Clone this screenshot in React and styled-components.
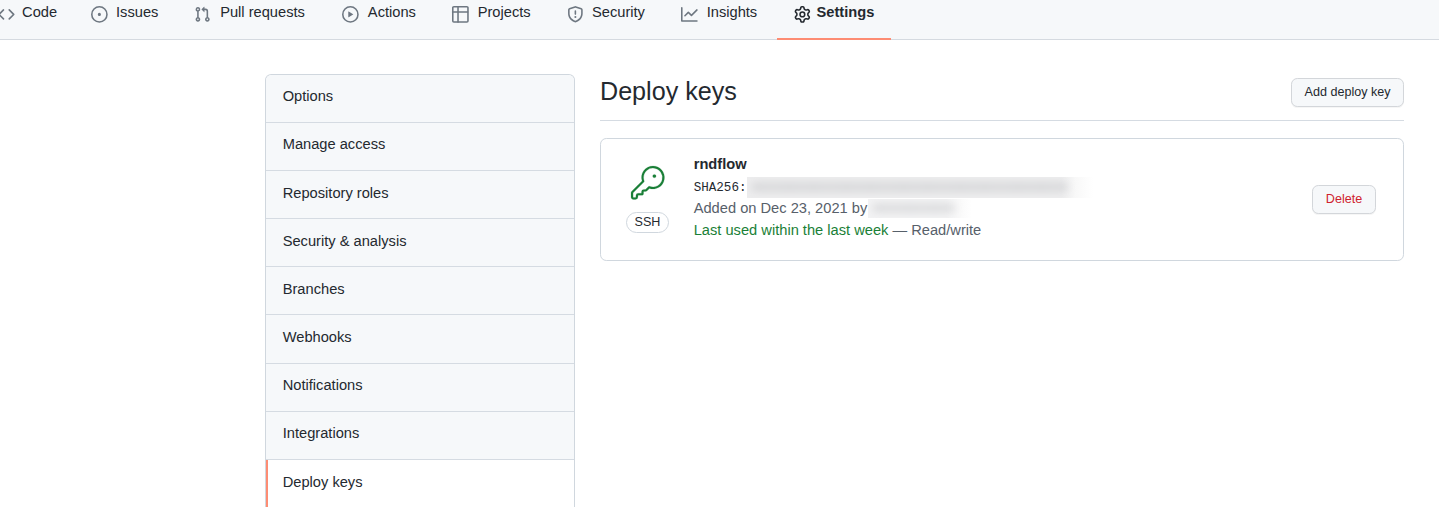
import React from "react";
import styled, { createGlobalStyle, css } from "styled-components";

const GlobalStyle = createGlobalStyle`
  * { box-sizing: border-box; }
  html, body { height: 100%; overflow: hidden; }
  body {
    margin: 0;
    background: #ffffff;
    color: #24292f;
    font-family: "Liberation Sans", Arial, sans-serif;
    font-size: 14.66px;
    line-height: 22px;
  }
`;

const ICONS = {
  code: "M4.72 3.22a.75.75 0 011.06 1.06L2.06 8l3.72 3.72a.75.75 0 11-1.06 1.06L.47 8.53a.75.75 0 010-1.06l4.25-4.25zm6.56 0a.75.75 0 10-1.06 1.06L13.94 8l-3.72 3.72a.75.75 0 101.06 1.06l4.25-4.25a.75.75 0 000-1.06l-4.25-4.25z",
  issue: "M8 9.5a1.5 1.5 0 100-3 1.5 1.5 0 000 3zM8 0a8 8 0 100 16A8 8 0 008 0zM1.5 8a6.5 6.5 0 1113 0 6.5 6.5 0 01-13 0z",
  pull: "M7.177 3.073L9.573.677A.25.25 0 0110 .854v4.792a.25.25 0 01-.427.177L7.177 3.427a.25.25 0 010-.354zM3.75 2.5a.75.75 0 100 1.5.75.75 0 000-1.5zm-2.25.75a2.25 2.25 0 113 2.122v5.256a2.251 2.251 0 11-1.5 0V5.372A2.25 2.25 0 011.5 3.25zM11 2.5h-1V4h1a1 1 0 011 1v5.628a2.251 2.251 0 101.5 0V5A2.5 2.5 0 0011 2.5zm1 10.25a.75.75 0 111.5 0 .75.75 0 01-1.5 0zM3.75 12a.75.75 0 100 1.5.75.75 0 000-1.5z",
  play: "M1.5 8a6.5 6.5 0 1113 0 6.5 6.5 0 01-13 0zM8 0a8 8 0 100 16A8 8 0 008 0zM6.379 5.227A.25.25 0 006 5.442v5.117a.25.25 0 00.379.214l4.264-2.559a.25.25 0 000-.428L6.379 5.227z",
  table: "M0 1.75C0 .784.784 0 1.75 0h12.5C15.216 0 16 .784 16 1.75v3.585a.746.746 0 010 .83v8.085A1.75 1.75 0 0114.25 16H6.309a.748.748 0 01-1.118 0H1.75A1.75 1.75 0 010 14.25V6.165a.746.746 0 010-.83V1.75zM1.5 6.5v7.75c0 .138.112.25.25.25H5v-8H1.5zM5 5H1.5V1.75a.25.25 0 01.25-.25H5V5zm1.5 1.5v8h7.75a.25.25 0 00.25-.25V6.5h-8zm8-1.5h-8V1.5h7.75a.25.25 0 01.25.25V5z",
  shield: "M7.467.133a1.75 1.75 0 011.066 0l5.25 1.68A1.75 1.75 0 0115 3.48V7c0 1.566-.32 3.182-1.303 4.682-.983 1.498-2.585 2.813-5.032 3.855a1.7 1.7 0 01-1.33 0c-2.447-1.042-4.049-2.357-5.032-3.855C1.32 10.182 1 8.566 1 7V3.48a1.75 1.75 0 011.217-1.667l5.25-1.68zm.61 1.429a.25.25 0 00-.153 0l-5.25 1.68a.25.25 0 00-.174.238V7c0 1.358.275 2.666 1.057 3.86.784 1.194 2.121 2.34 4.366 3.297a.2.2 0 00.154 0c2.245-.956 3.582-2.104 4.366-3.298C13.225 9.666 13.5 8.36 13.5 7V3.48a.25.25 0 00-.174-.237l-5.25-1.68zM9 10.5a1 1 0 11-2 0 1 1 0 012 0zm-.25-5.75a.75.75 0 10-1.5 0v3a.75.75 0 001.5 0v-3z",
  graph: "M1.5 1.75a.75.75 0 00-1.5 0v12.5c0 .414.336.75.75.75h14.5a.75.75 0 000-1.5H1.5V1.75zm14.28 2.53a.75.75 0 00-1.06-1.06L10 7.94 7.53 5.47a.75.75 0 00-1.06 0L3.22 8.72a.75.75 0 001.06 1.06L7 7.06l2.47 2.47a.75.75 0 001.06 0l5.25-5.25z",
  gear: "M7.429 1.525a6.593 6.593 0 011.142 0c.036.003.108.036.137.146l.289 1.105c.147.56.55.967.997 1.189.174.086.341.183.501.29.417.278.97.423 1.53.27l1.102-.303c.11-.03.175.016.195.046.219.31.41.641.573.989.014.031.022.11-.059.19l-.815.806c-.411.406-.562.957-.53 1.456a4.588 4.588 0 010 .582c-.032.499.119 1.05.53 1.456l.815.806c.08.08.073.159.059.19a6.494 6.494 0 01-.573.99c-.02.029-.086.074-.195.045l-1.103-.303c-.559-.153-1.112-.008-1.529.27-.16.107-.327.204-.5.29-.449.222-.851.628-.998 1.189l-.289 1.105c-.029.11-.101.143-.137.146a6.613 6.613 0 01-1.142 0c-.036-.003-.108-.037-.137-.146l-.289-1.105c-.147-.56-.55-.967-.997-1.189a4.502 4.502 0 01-.501-.29c-.417-.278-.97-.423-1.53-.27l-1.102.303c-.11.03-.175-.016-.195-.046a6.492 6.492 0 01-.573-.989c-.014-.031-.022-.11.059-.19l.815-.806c.411-.406.562-.957.53-1.456a4.587 4.587 0 010-.582c.032-.499-.119-1.05-.53-1.456l-.815-.806c-.08-.08-.073-.159-.059-.19a6.44 6.44 0 01.573-.99c.02-.029.086-.075.195-.045l1.103.303c.559.153 1.112.008 1.529-.27.16-.107.327-.204.5-.29.449-.222.851-.628.998-1.189l.289-1.105c.029-.11.101-.143.137-.146zM8 0c-.236 0-.47.01-.701.03-.743.065-1.29.615-1.458 1.261l-.29 1.106c-.017.066-.078.158-.211.224a5.994 5.994 0 00-.668.386c-.123.082-.233.09-.3.071L3.27 2.776c-.644-.177-1.392.02-1.82.63a7.977 7.977 0 00-.704 1.217c-.315.675-.111 1.422.363 1.891l.815.806c.05.048.098.147.088.294a6.084 6.084 0 000 .772c.01.147-.038.246-.088.294l-.815.806c-.474.469-.678 1.216-.363 1.891.2.428.436.835.704 1.218.428.609 1.176.806 1.82.63l1.103-.303c.066-.019.176-.011.299.071.213.143.436.272.668.386.133.066.194.158.212.224l.289 1.106c.169.646.715 1.196 1.458 1.26a8.094 8.094 0 001.402 0c.743-.064 1.29-.614 1.458-1.26l.29-1.106c.017-.066.078-.158.211-.224a5.98 5.98 0 00.668-.386c.123-.082.233-.09.3-.071l1.102.302c.644.177 1.392-.02 1.82-.63.268-.382.505-.789.704-1.217.315-.675.111-1.422-.364-1.891l-.814-.806c-.05-.048-.098-.147-.088-.294a6.1 6.1 0 000-.772c-.01-.147.039-.246.088-.294l.814-.806c.475-.469.679-1.216.364-1.891a7.992 7.992 0 00-.704-1.218c-.428-.609-1.176-.806-1.82-.63l-1.103.303c-.066.019-.176.011-.299-.071a5.991 5.991 0 00-.668-.386c-.133-.066-.194-.158-.212-.224L10.16 1.29C9.99.645 9.444.095 8.701.031A8.094 8.094 0 008 0zm1.5 8a1.5 1.5 0 11-3 0 1.5 1.5 0 013 0zM11 8a3 3 0 11-6 0 3 3 0 016 0z",
  key: "M16.75 8.5a1.25 1.25 0 100-2.5 1.25 1.25 0 000 2.5zM15.75 0a8.25 8.25 0 00-7.851 10.79L.513 18.178A1.75 1.75 0 000 19.414v2.836C0 23.217.784 24 1.75 24h1.5A1.75 1.75 0 005 22.25v-1a.25.25 0 01.25-.25h2.735a.75.75 0 00.545-.22l.214-.213A.875.875 0 009 19.948V18.5a.25.25 0 01.25-.25h1.086c.464 0 .91-.184 1.237-.513l1.636-1.636A8.25 8.25 0 1015.75 0zM9 8.25a6.75 6.75 0 114.288 6.287.75.75 0 00-.804.168l-1.971 1.972a.25.25 0 01-.177.073H9.25A1.75 1.75 0 007.5 18.5v1H5.25a1.75 1.75 0 00-1.75 1.75v1a.25.25 0 01-.25.25h-1.5a.25.25 0 01-.25-.25v-2.836a.25.25 0 01.073-.177l7.722-7.721a.75.75 0 00.168-.804A6.73 6.73 0 019 8.25z",
};

const Svg = styled.svg`
  display: block;
  flex: none;
  overflow: visible;
  fill: currentColor;
  stroke: currentColor;
  stroke-width: ${(p) => p.$weight};
`;

const Icon = ({ name, size = 16.75, box = 16, weight = 0 }) => (
  <Svg width={size} height={size} viewBox={`0 0 ${box} ${box}`} $weight={weight} aria-hidden="true">
    <path fillRule="evenodd" d={ICONS[name]} />
  </Svg>
);

const RepoNav = styled.nav`
  display: flex;
  height: 40px;
  background: #f6f8fa;
  border-bottom: 1px solid #d5dae0;
`;

const TabIcon = styled.span`
  display: flex;
  margin-top: 5.6px;
  margin-left: 0.1px;
  margin-right: 6.26px;
  color: ${(p) => (p.$active ? "#24292f" : "#6e7781")};
`;

const TabLabel = styled.span`
  display: inline-block;
  text-align: center;
  line-height: 24px;
  font-weight: ${(p) => (p.$active ? 700 : 400)};

  &::before {
    content: attr(data-label);
    display: block;
    height: 0;
    overflow: hidden;
    visibility: hidden;
    font-weight: 700;
  }
`;

const Tab = styled.a`
  display: flex;
  flex: none;
  align-items: flex-start;
  height: 40px;
  padding: 0 16.7px;
  white-space: nowrap;
  border-bottom: 2px solid ${(p) => (p.$active ? "#fd8c73" : "transparent")};

  &:first-child { margin-left: -18.5px; }
`;

const Page = styled.div`
  display: flex;
  align-items: flex-start;
  gap: 25px;
  width: 1139px;
  margin: 33.67px 0 0 265px;
`;

const Menu = styled.nav`
  flex: none;
  width: 310px;
  overflow: hidden;
  border: 1px solid #d0d7de;
  border-bottom: 0;
  border-radius: 6.3px 6.3px 0 0;
`;

const MenuItem = styled.a`
  display: block;
  height: 48.15px;
  padding: 10.67px 16.7px 0;
  border-bottom: 1px solid #d5dbe2;
  background: #f6f8fa;

  ${(p) =>
    p.$active &&
    css`
      height: 50px;
      padding-top: 11.2px;
      background: #ffffff;
      box-shadow: inset 2px 0 0 #fd8c73;
    `}
`;

const Content = styled.main`
  flex: 1;
  min-width: 0;
  margin-top: 0.33px;
`;

const Header = styled.header`
  display: flex;
  justify-content: space-between;
  align-items: flex-start;
  height: 47px;
  padding-top: 4px;
  margin-bottom: 17px;
  border-bottom: 1px solid #d5dbe2;
`;

const Title = styled.h2`
  margin: -5px 0 0;
  font-size: 25.13px;
  font-weight: 400;
  line-height: 37px;
`;

const Button = styled.button`
  flex: none;
  min-width: 64px;
  height: 29px;
  padding: 0 12.5px 1px;
  border: 1px solid #d3d6da;
  border-radius: 6.3px;
  background: #f6f8fa;
  box-shadow: 0 1px 0 rgba(27, 31, 36, 0.04);
  color: ${(p) => (p.$danger ? "#cf222e" : "#24292f")};
  font-family: inherit;
  font-size: 12.57px;
  line-height: 20px;
`;

const KeyCard = styled.section`
  display: flex;
  align-items: center;
  height: 123px;
  padding: 0 27px 0 25px;
  border: 1px solid #d0d7de;
  border-radius: 6.3px;
`;

const KeyType = styled.div`
  display: flex;
  flex-direction: column;
  align-items: center;
  gap: 12px;
  width: 43px;
  margin-right: 24.7px;
  color: #1a7f37;
`;

const Badge = styled.span`
  width: 43px;
  height: 21px;
  border: 1px solid #d0d7de;
  border-radius: 11px;
  color: #24292f;
  font-size: 12.57px;
  line-height: 19px;
  text-align: center;
`;

const Details = styled.div`
  flex: 1;
  height: 93px;
  color: #57606a;
`;

const Line = styled.div`
  display: flex;
  align-items: center;
  height: ${(p) => p.$height}px;
  white-space: pre;
`;

const KeyName = styled.strong`
  color: #24292f;
`;

const Fingerprint = styled.code`
  margin-top: 1.5px;
  color: #24292f;
  font-family: "Liberation Mono", monospace;
  font-size: 12.57px;
`;

const Used = styled.span`
  color: #1a7f37;
`;

const Redacted = styled.span`
  display: flex;
  flex: none;
  align-items: center;
  width: ${(p) => p.$width}px;
  height: ${(p) => p.$height}px;
  margin-left: ${(p) => p.$gap}px;
  overflow: hidden;
  background: ${(p) => p.$fill};

  &::before {
    content: "";
    flex: none;
    width: ${(p) => p.$ink}px;
    height: 8px;
    margin-left: 5px;
    background:
      repeating-linear-gradient(90deg, #8c8e9240 0 9px, transparent 9px 31px, #8c8e9230 31px 44px, transparent 44px 57px),
      #a2a4a8;
    opacity: 0.3;
    filter: blur(4px);
  }
`;

const tabs = [
  ["Code", "code"],
  ["Issues", "issue"],
  ["Pull requests", "pull"],
  ["Actions", "play"],
  ["Projects", "table"],
  ["Security", "shield"],
  ["Insights", "graph"],
  ["Settings", "gear"],
];

const menu = [
  "Options",
  "Manage access",
  "Repository roles",
  "Security & analysis",
  "Branches",
  "Webhooks",
  "Notifications",
  "Integrations",
  "Deploy keys",
];

export default function App() {
  return (
    <>
      <GlobalStyle />
      <RepoNav>
        {tabs.map(([label, icon]) => {
          const active = label === "Settings";
          return (
            <Tab key={label} $active={active}>
              <TabIcon $active={active}>
                <Icon name={icon} />
              </TabIcon>
              <TabLabel data-label={label} $active={active}>
                {label}
              </TabLabel>
            </Tab>
          );
        })}
      </RepoNav>
      <Page>
        <Menu>
          {menu.map((label) => (
            <MenuItem key={label} $active={label === "Deploy keys"}>
              {label}
            </MenuItem>
          ))}
        </Menu>
        <Content>
          <Header>
            <Title>Deploy keys</Title>
            <Button>Add deploy key</Button>
          </Header>
          <KeyCard>
            <KeyType>
              <Icon name="key" size={33.5} box={24} weight={0.12} />
              <Badge>SSH</Badge>
            </KeyType>
            <Details>
              <Line $height={22}>
                <KeyName>rndflow</KeyName>
              </Line>
              <Line $height={25}>
                <Fingerprint>SHA256:</Fingerprint>
                <Redacted
                  $gap={0.5}
                  $width={346}
                  $height={21}
                  $ink={316}
                  $fill="linear-gradient(90deg, #ededee 0 315px, #f8f8f8 328px, #ffffff 346px)"
                />
              </Line>
              <Line $height={17}>
                {"Added on Dec 23, 2021 by"}
                <Redacted
                  $gap={1}
                  $width={104}
                  $height={19}
                  $ink={82}
                  $fill="linear-gradient(90deg, #f3f3f4 0 78px, #fafafa 92px, #ffffff 104px)"
                />
              </Line>
              <Line $height={27}>
                <Used>Last used within the last week</Used>
                {" — Read/write"}
              </Line>
            </Details>
            <Button $danger>Delete</Button>
          </KeyCard>
        </Content>
      </Page>
    </>
  );
}
